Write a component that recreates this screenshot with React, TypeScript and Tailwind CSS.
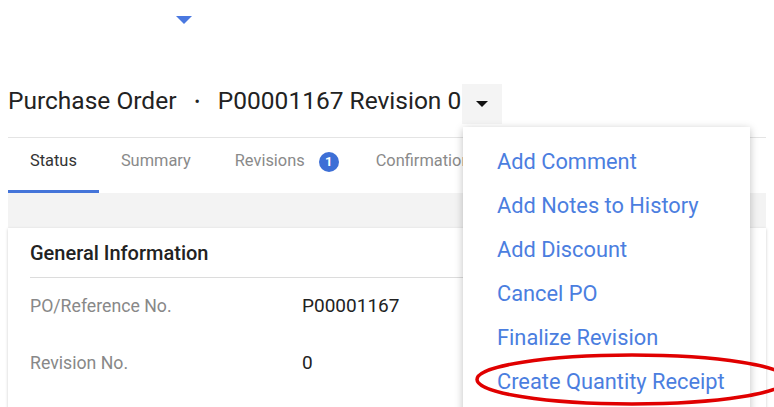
import React from "react";

const menuItems = [
  "Add Comment",
  "Add Notes to History",
  "Add Discount",
  "Cancel PO",
  "Finalize Revision",
  "Create Quantity Receipt",
];

const tabs = [
  { label: "Status", active: true },
  { label: "Summary" },
  { label: "Revisions", badge: 1 },
  { label: "Confirmations" },
];

const Caret: React.FC<{ className?: string }> = ({ className }) => (
  <svg viewBox="0 0 10 5" className={className}>
    <path d="M0 0h10L5 5z" fill="currentColor" />
  </svg>
);

export default function App() {
  return (
    <div className="relative h-[407px] w-[774px] overflow-hidden bg-white font-['Roboto',sans-serif]">
      {/* top nav marker */}
      <div className="h-[84px] pl-[176px] pt-[16px]">
        <Caret className="h-[8px] w-[16px] text-[#4a78e0]" />
      </div>

      {/* page header */}
      <div className="flex h-[40px] items-start px-2">
        <h1 className="mt-[1px] whitespace-nowrap text-[24.5px] leading-[32px] text-[#222]">
          Purchase Order<span className="mx-[18px] align-[2px] text-[16px]">•</span>P00001167 Revision 0
        </h1>
        <button className="ml-[1px] flex h-[40px] w-[40px] shrink-0 items-center justify-center bg-[#f4f4f4] text-[#111]">
          <Caret className="h-[6px] w-[12px]" />
        </button>
      </div>

      <div className="mx-2 mt-[13px] border-t border-[#e4e4e4]" />

      {/* tabs */}
      <div className="mx-2 flex h-[55px] whitespace-nowrap">
        {tabs.map(tab => (
          <div
            key={tab.label}
            className={`flex items-center px-[22px] pb-[5px] text-[16.4px] ${
              tab.active
                ? "border-b-[3px] border-[#4474d9] text-[#333]"
                : "border-b-[3px] border-transparent text-[#8a8a8a]"
            }`}
          >
            {tab.label}
            {tab.badge && (
              <span className="ml-[14px] mr-[-7px] flex h-[20px] w-[20px] items-center justify-center rounded-full bg-[#3d6fd6] text-[13px] font-bold text-white">
                {tab.badge}
              </span>
            )}
          </div>
        ))}
      </div>

      {/* content */}
      <div className="mx-2 h-[300px] bg-[#f3f3f3] pt-[35px]">
        <div className="h-full bg-white px-[22px] shadow-[0_1px_3px_rgba(0,0,0,0.2)]">
          <div className="flex h-[49px] items-center text-[20px] font-medium text-[#222]">
            General Information
          </div>
          <div className="border-t border-[#dcdcdc]" />
          <div className="grid grid-cols-[272px_1fr]">
            <div className="flex h-[57px] items-center text-[17.7px] text-[#888]">PO/Reference No.</div>
            <div className="flex h-[57px] items-center text-[19px] text-[#222]">P00001167</div>
            <div className="flex h-[56px] items-center text-[17.7px] text-[#888]">Revision No.</div>
            <div className="flex h-[56px] items-center text-[19px] text-[#222]">0</div>
          </div>
        </div>
      </div>

      {/* actions menu */}
      <ul className="absolute left-[463px] top-[127px] h-[300px] w-[287px] bg-white pl-[34px] pt-[13px] shadow-[0_2px_8px_rgba(0,0,0,0.25)]">
        {menuItems.map(item => (
          <li key={item} className="flex h-[44px] items-center whitespace-nowrap text-[21.8px] text-[#4b7edf]">
            {item}
          </li>
        ))}
      </ul>

      <svg className="absolute left-[470px] top-[350px] h-[57px] w-[330px]" viewBox="0 0 330 57">
        <ellipse cx="162" cy="29.5" rx="155" ry="24.5" fill="none" stroke="#e00000" strokeWidth="3.5" />
      </svg>
    </div>
  );
}
